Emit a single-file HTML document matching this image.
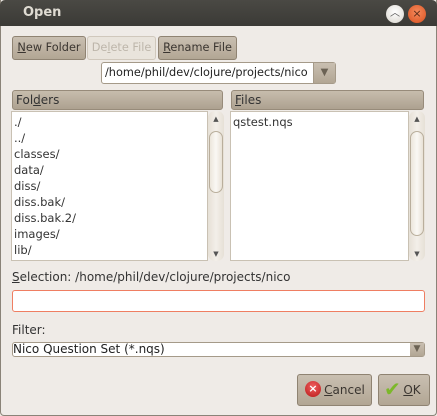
<!DOCTYPE html>
<html><head><style>
*{box-sizing:border-box;margin:0;padding:0}
body{width:437px;height:416px;background:#f0ebe3;font-family:"DejaVu Sans","Liberation Sans",sans-serif;font-size:11px;color:#333;position:relative;overflow:hidden}
.a{position:absolute}
.win{left:0;top:0;width:437px;height:416px;background:#efebe7;border:1px solid #8a8378;border-top:none;border-radius:0 0 4px 4px}
.title{left:0;top:0;width:437px;height:26px;background:linear-gradient(#4a4944,#3b3a36);border-radius:5px 5px 0 0}
.btn{background:linear-gradient(#c9bfb1,#b2a694);border:1px solid #8f8372;border-radius:3px;color:#3a3530;font-size:11.3px;text-align:center;line-height:22px;white-space:nowrap;overflow:hidden}
.hdr{background:linear-gradient(#c7bdad,#ada190);border:1px solid #978b7a;border-radius:3px;font-size:12px;line-height:18px;padding-left:3px;color:#333}
.list{background:#fff;border:1px solid #c9c1b3}
.sb{background:linear-gradient(90deg,#e6e0d6,#f3efe9,#e6e0d6);border-radius:7px}
.thumb{background:linear-gradient(90deg,#ece6dc,#faf8f4,#e8e1d6);border:1px solid #b9ae9c;border-radius:7px}
.row{height:16px;line-height:16px;font-size:11.5px;color:#333;padding-left:2px}
u{text-decoration:underline}
</style></head><body>
<div class="a win"></div>
<div class="a title"></div>
<div class="a" style="left:23px;top:5px;color:#dfdbd2;font-weight:bold;font-size:13px">Open</div>
<div class="a" style="left:386px;top:5px;width:18px;height:18px;border-radius:9px;background:radial-gradient(circle at 50% 40%,#fff,#d8d4cc);color:#555;font-size:10px;text-align:center;line-height:18px">︿</div>
<div class="a" style="left:408px;top:5px;width:18px;height:18px;border-radius:9px;background:radial-gradient(circle at 50% 40%,#f58a5c,#d9501f);color:#5a2a18;font-size:11px;text-align:center;line-height:18px">×</div>

<div class="a btn" style="left:12px;top:36px;width:74px;height:24px"><u>N</u>ew Folder</div>
<div class="a btn" style="left:87px;top:36px;width:69px;height:24px;background:#e9e4dc;border-color:#d0c8bc;color:#bdb6aa">De<u>l</u>ete File</div>
<div class="a btn" style="left:158px;top:36px;width:79px;height:24px"><u>R</u>ename File</div>

<div class="a" style="left:101px;top:62px;width:235px;height:22px;border:1px solid #a59a89;border-radius:3px;background:#fff"></div>
<div class="a" style="left:105px;top:63px;width:207px;overflow:hidden;white-space:nowrap;font-size:11.3px;line-height:20px;color:#222">/home/phil/dev/clojure/projects/nico</div>
<div class="a" style="left:313px;top:63px;width:22px;height:20px;background:linear-gradient(#c9bfb1,#b2a694);border-left:1px solid #a59a89;color:#6b6254;font-size:10px;text-align:center;line-height:20px">▼</div>

<div class="a hdr" style="left:12px;top:90px;width:211px;height:20px">Fol<u>d</u>ers</div>
<div class="a hdr" style="left:231px;top:90px;width:193px;height:20px"><u>F</u>iles</div>

<div class="a list" style="left:11px;top:111px;width:197px;height:150px;overflow:hidden;padding-top:2px">
<div class="row">./</div><div class="row">../</div><div class="row">classes/</div><div class="row">data/</div><div class="row">diss/</div><div class="row">diss.bak/</div><div class="row">diss.bak.2/</div><div class="row">images/</div><div class="row">lib/</div><div class="row">l</div>
</div>
<div class="a sb" style="left:208px;top:111px;width:16px;height:150px"></div>
<div class="a" style="left:208px;top:115px;width:16px;font-size:7px;text-align:center;color:#555">▲</div>
<div class="a thumb" style="left:209px;top:131px;width:14px;height:62px"></div>
<div class="a" style="left:208px;top:250px;width:16px;font-size:7px;text-align:center;color:#555">▼</div>

<div class="a list" style="left:230px;top:111px;width:179px;height:150px;padding-top:2px"><div class="row">qstest.nqs</div></div>
<div class="a sb" style="left:409px;top:111px;width:16px;height:150px"></div>
<div class="a" style="left:409px;top:115px;width:16px;font-size:7px;text-align:center;color:#555">▲</div>
<div class="a thumb" style="left:410px;top:131px;width:14px;height:105px"></div>
<div class="a" style="left:409px;top:250px;width:16px;font-size:7px;text-align:center;color:#555">▼</div>

<div class="a" style="left:12px;top:270px;font-size:12px;color:#333"><u>S</u>election: /home/phil/dev/clojure/projects/nico</div>
<div class="a" style="left:12px;top:290px;width:413px;height:22px;background:#fff;border:1px solid #ef7e62;border-radius:3px"></div>

<div class="a" style="left:12px;top:323px;font-size:12px;color:#333">Filter:</div>
<div class="a" style="left:12px;top:342px;width:413px;height:15px;background:#fff;border:1px solid #a59a89;border-radius:3px"></div>
<div class="a" style="left:13px;top:342px;font-size:12px;line-height:15px;color:#222">Nico Question Set (*.nqs)</div>
<div class="a" style="left:410px;top:343px;width:14px;height:13px;background:linear-gradient(#c9bfb1,#b2a694);color:#6b6254;font-size:9px;text-align:center;line-height:13px">▼</div>

<div class="a btn" style="left:297px;top:374px;width:75px;height:32px;line-height:30px;padding-left:20px;font-size:12px"><u>C</u>ancel</div>
<div class="a" style="left:305px;top:381px;width:16px;height:16px;border-radius:8px;background:radial-gradient(circle at 50% 35%,#f06060,#b81818);color:#fff;font-size:11px;font-weight:bold;text-align:center;line-height:16px">×</div>
<div class="a btn" style="left:378px;top:374px;width:52px;height:32px;line-height:30px;padding-left:16px;font-size:12px"><u>O</u>K</div>
<div class="a" style="left:384px;top:378px;width:20px;height:22px;color:#7cb82a;font-size:20px;line-height:22px">✔</div>
</body></html>
